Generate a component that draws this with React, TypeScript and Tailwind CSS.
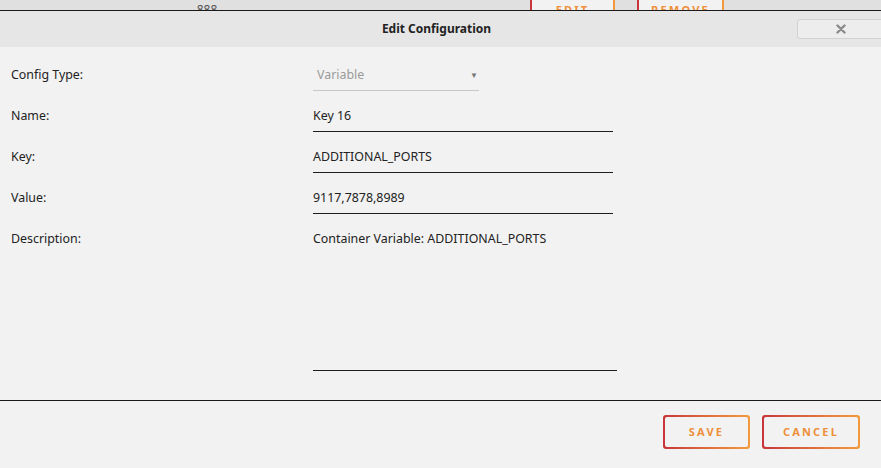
import React from 'react';

const font = { fontFamily: '"Noto Sans", "Open Sans", sans-serif' };

function GradientButton({ label, className }: { label: string; className?: string }) {
    return (
        <div className={`shrink-0 rounded-[3px] bg-gradient-to-r from-[#c8343a] to-[#f29a3c] p-[2px] ${className ?? ''}`}>
            <div className="flex h-full w-full items-center justify-center rounded-[2px] bg-[#f2f2f2] text-[11px] font-bold tracking-[0.2em] text-[#ee8f3a]">
                {label}
            </div>
        </div>
    );
}

function Field({ label, children }: { label: string; children: React.ReactNode }) {
    return (
        <div className="flex">
            <div className="w-[313px] shrink-0 pl-[11px] text-[12.4px] leading-[18px] text-[#222]">{label}</div>
            {children}
        </div>
    );
}

function TextLine({ value }: { value: string }) {
    return (
        <div className="w-[300px] border-b border-[#1e1e1e] pb-[6px] text-[12.4px] leading-[18px] text-[#222]">{value}</div>
    );
}

export default function App() {
    return (
        <div className="flex h-[468px] w-[881px] flex-col overflow-hidden bg-[#f2f2f2]" style={font}>
            {/* page behind the dialog */}
            <div className="h-[10px] shrink-0 overflow-hidden bg-[#e0e0e0]">
                <div className="flex items-start">
                    <div className="mt-[1px] w-[414px] text-center text-[12px] leading-[18px] text-[#555]">888</div>
                    <div className="-mt-[5px] ml-[116px] flex gap-[22px]">
                        <GradientButton label="EDIT" className="h-[30px] w-[85px]" />
                        <GradientButton label="REMOVE" className="h-[30px] w-[87px]" />
                    </div>
                </div>
            </div>
            <div className="h-px shrink-0 bg-[#1a1a1a]" />

            {/* header */}
            <div className="flex h-[36px] shrink-0 items-center bg-[#e6e6e6]">
                <div className="flex-1 pl-[76px] text-center text-[12px] font-bold text-[#222]">Edit Configuration</div>
                <div className="mr-[-4px] flex h-[20px] w-[88px] items-center justify-center rounded-[3px] border border-[#d2d2d2] bg-[#ededed]">
                    <svg width="10" height="10" viewBox="0 0 10 10">
                        <path d="M1.5 1.5 L8.5 8.5 M8.5 1.5 L1.5 8.5" stroke="#8a8a8a" strokeWidth="2.4" strokeLinecap="round" />
                    </svg>
                </div>
            </div>

            {/* body */}
            <div className="flex shrink-0 flex-col gap-[16px] pt-[19px]">
                <Field label="Config Type:">
                    <div className="flex w-[166px] items-center justify-between border-b border-[#c8c8c8] pb-[6px] pl-[4px] pr-[1px] text-[12.4px] leading-[18px] text-[#9a9a9a]">
                        <span>Variable</span>
                        <span className="text-[8px] text-[#777]">▼</span>
                    </div>
                </Field>
                <Field label="Name:">
                    <TextLine value="Key 16" />
                </Field>
                <Field label="Key:">
                    <TextLine value="ADDITIONAL_PORTS" />
                </Field>
                <Field label="Value:">
                    <TextLine value="9117,7878,8989" />
                </Field>
                <Field label="Description:">
                    <div className="h-[141px] w-[304px] border-b border-[#1e1e1e] text-[12.4px] leading-[18px] text-[#222]">
                        Container Variable: ADDITIONAL_PORTS
                    </div>
                </Field>
            </div>

            <div className="mt-[29px] h-px shrink-0 bg-[#1a1a1a]" />

            {/* footer */}
            <div className="flex shrink-0 justify-end gap-[12px] pr-[21px] pt-[14px]">
                <GradientButton label="SAVE" className="h-[34px] w-[87px]" />
                <GradientButton label="CANCEL" className="h-[34px] w-[98px]" />
            </div>
        </div>
    );
}
